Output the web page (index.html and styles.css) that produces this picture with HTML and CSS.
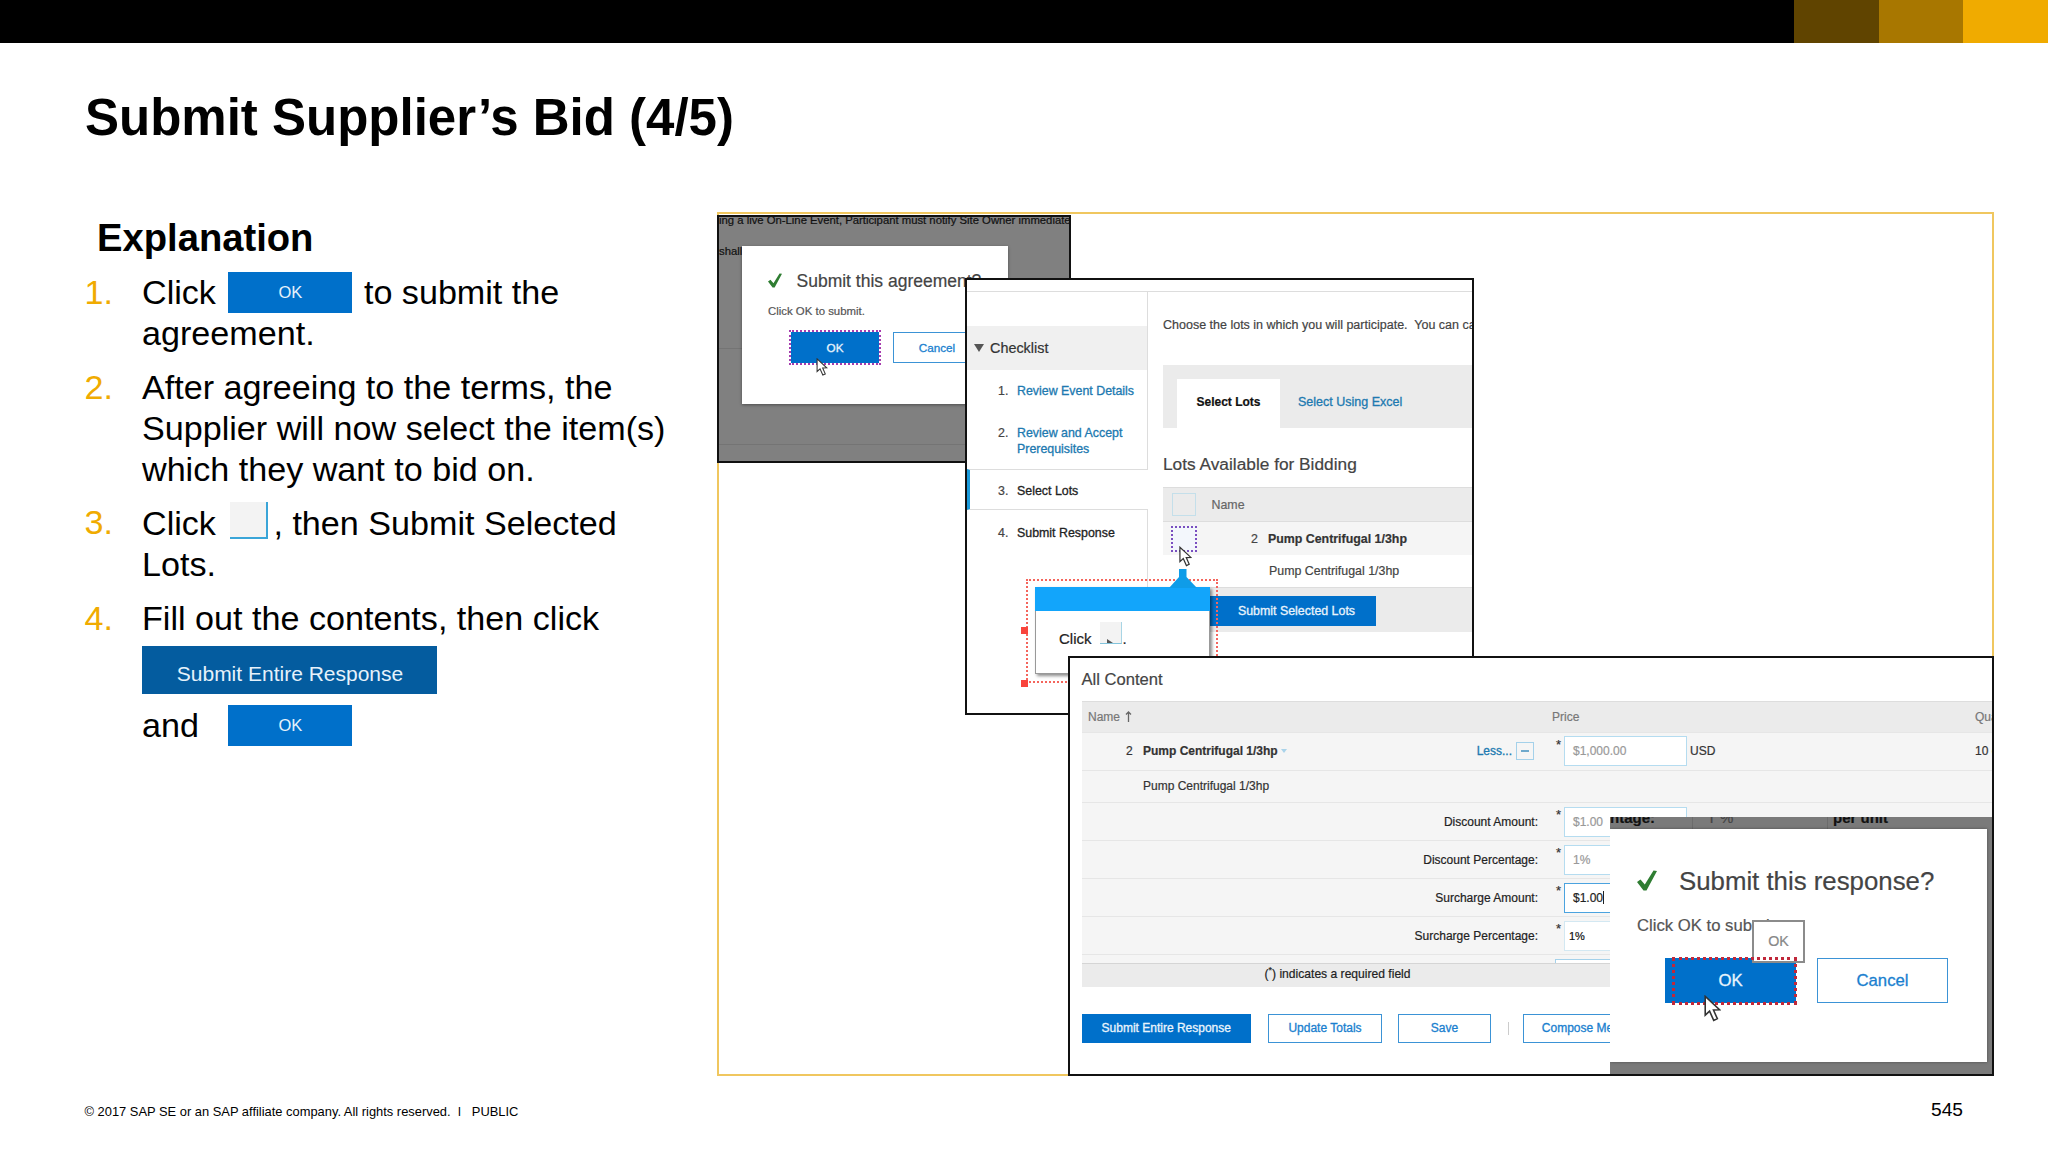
FILE: index.html
```html
<!DOCTYPE html>
<html lang="en">
<head>
  <meta charset="UTF-8" />
  <meta name="viewport" content="width=device-width, initial-scale=1.0" />
  <title>Submit Supplier’s Bid (4/5)</title>
  <link rel="stylesheet" href="styles.css">
</head>
<body>

  <svg class="defs" width="0" height="0">
    <symbol id="cursor" viewBox="0 0 14 22">
      <path d="M1 1 L1 16.5 L4.6 13.2 L8 20.8 L11 19.4 L7.8 12.2 L12.8 12 Z" fill="#fff" stroke="#333" stroke-width="1.3" />
    </symbol>
    <symbol id="check" viewBox="0 0 20 21">
      <path d="M0 12 L3.5 9.5 L7.8 14.5 L16.5 0.5 L20 1 L9.5 20.5 L6.5 20.5 Z" fill="#2f7d32" />
    </symbol>
  </svg>

  <div class="slide">
    <header class="topbar">
      <span class="block dark"></span>
      <span class="block mid"></span>
      <span class="block gold"></span>
    </header>

    <h1>Submit Supplier’s Bid (4/5)</h1>

    <main>
      <section class="explanation">
        <h2>Explanation</h2>
        <ol>
          <li>Click <span class="chip chip-ok">OK</span> to submit the agreement.</li>
          <li>After agreeing to the terms, the Supplier will now select the item(s) which they want to bid on.</li>
          <li>Click <span class="chip-box"></span>, then Submit Selected Lots.</li>
          <li>Fill out the contents, then click
            <span class="chip chip-response">Submit Entire Response</span>
            <span class="and-row">and <span class="chip chip-ok">OK</span></span>
          </li>
        </ol>
      </section>

      <section class="stage">

        <!-- agreement dialog -->
        <div class="window win-agreement">
          <p class="terms">ing a live On-Line Event, Participant must notify Site Owner immediately</p>
          <p class="terms">shall</p>
          <div class="rule rule-first"></div>
          <div class="rule"></div>
          <div class="dialog">
            <div class="dialog-title">
              <svg width="14" height="15"><use href="#check" /></svg>
              <span>Submit this agreement?</span>
            </div>
            <p>Click OK to submit.</p>
            <div class="dialog-buttons">
              <span class="btn primary">OK</span>
              <span class="btn">Cancel</span>
            </div>
            <svg class="cursor" width="12" height="18"><use href="#cursor" /></svg>
          </div>
        </div>

        <!-- select lots -->
        <div class="window win-lots">
          <div class="strip"></div>
          <div class="lots-body">
            <aside>
              <div class="spacer"></div>
              <div class="checklist">
                <svg width="10" height="8"><path d="M0 0 H10 L5 8 Z" fill="#555" /></svg>
                Checklist
              </div>
              <div class="step"><span>1.</span><a>Review Event Details</a></div>
              <div class="step"><span>2.</span><a>Review and Accept Prerequisites</a></div>
              <div class="step active"><span>3.</span><b>Select Lots</b></div>
              <div class="step last"><span>4.</span><b>Submit Response</b></div>
            </aside>
            <div class="lots-main">
              <p class="intro">Choose the lots in which you will participate.&nbsp; You can cancel</p>
              <div class="tabs">
                <span class="tab">Select Lots</span>
                <a>Select Using Excel</a>
              </div>
              <h3>Lots Available for Bidding</h3>
              <div class="lot head"><i class="box"></i><span>Name</span></div>
              <div class="lot odd"><i class="box picked"></i><span class="num">2</span><b>Pump Centrifugal 1/3hp</b></div>
              <div class="lot plain"><span>Pump Centrifugal 1/3hp</span></div>
              <div class="lot foot"><span class="btn primary">Submit Selected Lots</span></div>
            </div>
          </div>
          <svg class="cursor" width="13" height="21"><use href="#cursor" /></svg>
          <div class="callout">
            <i class="handle one"></i>
            <i class="handle two"></i>
            <svg class="pointer" width="28" height="19"><path d="M10 0 H17.5 V8 L28 19 H0 L10 8 Z" fill="#0f9ce8" /></svg>
            <div class="bubble">
              <div class="bubble-head"></div>
              <div class="bubble-text">Click <i class="mini"><svg width="6" height="4"><path d="M0 4 V0 L6 4 Z" fill="#555" /></svg></i>.</div>
            </div>
          </div>
        </div>

        <!-- all content -->
        <div class="window win-content">
          <h3>All Content</h3>
          <div class="row head">
            <span class="name">Name <svg width="7" height="11"><path d="M3.5 11 V1 M1 3.5 L3.5 1 L6 3.5" fill="none" stroke="#666" stroke-width="1.3" /></svg></span>
            <span class="price">Price</span>
            <span>Quantity</span>
          </div>
          <div class="row item">
            <span class="name"><span class="num">2</span><b>Pump Centrifugal 1/3hp</b><svg class="caret" width="6" height="4"><path d="M0 0 H6 L3 4 Z" fill="#a9d3ea" /></svg><a class="less">Less...</a><i class="minus"></i></span>
            <span class="price"><em>*</em><span class="input">$1,000.00</span>USD</span>
            <span class="qty">10 each</span>
          </div>
          <div class="row sub"><span class="name">Pump Centrifugal 1/3hp</span></div>
          <div class="row field">
            <span class="label">Discount Amount:</span>
            <span class="price"><em>*</em><span class="input">$1.00</span>USD</span>
          </div>
          <div class="row field">
            <span class="label">Discount Percentage:</span>
            <span class="price"><em>*</em><span class="input">1%</span></span>
          </div>
          <div class="row field">
            <span class="label">Surcharge Amount:</span>
            <span class="price"><em>*</em><span class="input focus">$1.00<i class="caret-bar"></i></span></span>
          </div>
          <div class="row field">
            <span class="label">Surcharge Percentage:</span>
            <span class="price"><em>*</em><span class="input filled">1%</span></span>
          </div>
          <div class="row cut"><i></i></div>
          <div class="required">(<sup>*</sup>) indicates a required field</div>
          <div class="actions">
            <span class="btn primary submit">Submit Entire Response</span>
            <span class="btn update">Update Totals</span>
            <span class="btn save">Save</span>
            <i class="sep"></i>
            <span class="btn compose">Compose Message</span>
          </div>

          <div class="response">
            <div class="behind"><b>ntage:</b><span>T %</span><b>per unit</b></div>
            <div class="dialog large">
              <div class="dialog-title">
                <svg width="20" height="21"><use href="#check" /></svg>
                <span>Submit this response?</span>
              </div>
              <p>Click OK to submit.</p>
              <div class="dialog-buttons">
                <span class="btn primary">OK</span>
                <span class="btn">Cancel</span>
              </div>
              <span class="tooltip">OK</span>
              <i class="marker"></i>
              <svg class="cursor" width="17" height="27"><use href="#cursor" /></svg>
            </div>
          </div>
        </div>

      </section>
    </main>

    <footer>
      <span>© 2017 SAP SE or an SAP affiliate company. All rights reserved. &nbsp;ǀ&nbsp;&nbsp; PUBLIC</span>
      <span class="page">545</span>
    </footer>
  </div>

</body>
</html>
```

FILE: styles.css
```css
* {
  box-sizing: border-box;
}

body {
  margin: 0;
  font-family: "Liberation Sans", Arial, sans-serif;
  background: #fff;
  color: #000;
  overflow: hidden;
}

h1, h2, h3, p, ol {
  margin: 0;
  padding: 0;
}

i, em {
  font-style: normal;
}

svg {
  display: block;
  flex: none;
}

.defs {
  position: absolute;
}

.slide {
  width: 2048px;
  height: 1152px;
  display: flex;
  flex-direction: column;
}

/* top bar */
.topbar {
  height: 42.5px;
  background: #000;
  display: flex;
  justify-content: flex-end;
}

.block {
  width: 84.6px;
}

.dark {
  background: #604400;
}

.mid {
  background: #a87700;
}

.gold {
  background: #f0ab00;
}

h1 {
  margin: 45px 0 0 85px;
  height: 60px;
  font-size: 51px;
  line-height: 60px;
}

main {
  display: flex;
  height: 864px;
  margin-top: 64.5px;
  padding-left: 85px;
}

/* left column */
.explanation {
  width: 632px;
  flex: none;
}

h2 {
  padding-left: 12px;
  margin-top: 2.5px;
  font-size: 38.2px;
  line-height: 46px;
}

ol {
  list-style: none;
  counter-reset: step;
  margin-top: 11.8px;
  font-size: 34.13px;
  line-height: 41.1px;
}

li {
  counter-increment: step;
  width: 600px;
  padding-left: 57px;
  margin-bottom: 12.2px;
}

li::before {
  content: counter(step) ".";
  float: left;
  width: 57px;
  margin-left: -57.5px;
  color: #f0ab00;
}

.chip {
  display: inline-block;
  background: #0070ca;
  color: #e6f2fb;
  text-align: center;
}

.chip-ok {
  width: 124px;
  height: 41px;
  margin: 0 2px 0 3px;
  font-size: 16.5px;
  line-height: 41px;
  vertical-align: top;
}

.chip-box {
  display: inline-block;
  width: 38px;
  height: 37px;
  margin: 0 5px 0 5px;
  background: #f3f3f3;
  border-right: 2px solid #3aa5d8;
  border-bottom: 2px solid #3aa5d8;
  vertical-align: -4px;
}

.chip-response {
  display: block;
  width: 295px;
  height: 48px;
  margin-top: 7.5px;
  padding: 4px 0 0 1px;
  background: #045c9f;
  font-size: 21px;
  line-height: 47px;
}

.and-row {
  display: block;
  margin-top: 10.5px;
}

.and-row .chip-ok {
  margin-left: 20px;
}

/* screenshot area */
.stage {
  position: relative;
  width: 1276.5px;
  border: 2px solid #f0c75f;
}

.window {
  position: absolute;
  border: 2px solid #111;
  background: #fff;
  overflow: hidden;
  -webkit-text-stroke: 0.2px;
}

.btn {
  display: flex;
  align-items: center;
  justify-content: center;
  flex: none;
  border: 1.5px solid #3b93d6;
  color: #1a7fcf;
  background: #fff;
  white-space: nowrap;
  -webkit-text-stroke: 0.3px;
}

.btn.primary {
  background: #0070ca;
  border-color: #0070ca;
  color: #e9f4fc;
}

.cursor {
  position: absolute;
}

/* window 1 */
.win-agreement {
  left: -2px;
  top: 1px;
  width: 354px;
  height: 248px;
  background: #808080;
}

.terms {
  margin: -4px 0 17px;
  height: 14px;
  font-size: 11.3px;
  line-height: 14px;
  color: #111;
  white-space: nowrap;
}

.win-agreement .terms + .terms {
  margin: 0;
}

.rule {
  height: 96px;
  border-top: 1px solid #747474;
}

.rule-first {
  margin-top: 90px;
}

.dialog {
  position: absolute;
  left: 23px;
  top: 29px;
  width: 266px;
  height: 158px;
  padding: 24.5px 0 0 26px;
  background: #fff;
  box-shadow: 0 1px 3px rgba(0, 0, 0, 0.4);
  color: #555;
}

.dialog-title {
  display: flex;
  align-items: center;
  gap: 14.5px;
  height: 20px;
  font-size: 17.5px;
  line-height: 20px;
  color: #444;
  white-space: nowrap;
}

.dialog p {
  margin-top: 12.3px;
  font-size: 11.4px;
  line-height: 16px;
}

.dialog-buttons {
  display: flex;
  gap: 14px;
  margin: 13.7px 0 0 23px;
  font-size: 11.7px;
}

.dialog .btn {
  width: 88px;
  height: 30.5px;
}

.dialog .primary {
  outline: 2px dotted #a63cae;
}

.dialog .cursor {
  left: 74px;
  top: 112px;
}

/* window 2 */
.win-lots {
  left: 246px;
  top: 64px;
  width: 509px;
  height: 437px;
  font-size: 12.4px;
  color: #444;
}

.strip {
  height: 12px;
  border-bottom: 1px solid #ddd;
}

.lots-body {
  display: flex;
}

aside {
  width: 181px;
  flex: none;
}

.spacer {
  height: 34px;
  border-right: 1px solid #ddd;
}

.checklist {
  display: flex;
  align-items: center;
  gap: 6px;
  height: 43.5px;
  padding: 1px 0 0 7px;
  background: #f0f0f0;
  border-right: 1px solid #ddd;
  font-size: 14.4px;
  color: #333;
}

.step {
  display: flex;
  gap: 11px;
  padding: 14.5px 8px 12.5px 31px;
  line-height: 15.3px;
  border-right: 1px solid #ddd;
}

.step span {
  width: 8px;
}

.step a, .tabs a, .less {
  color: #2079b0;
  -webkit-text-stroke: 0.3px;
}

.step b {
  font-weight: normal;
  color: #222;
  -webkit-text-stroke: 0.3px;
}

.step.active {
  height: 41px;
  padding-left: 28px;
  border: solid #ddd;
  border-width: 1px 0;
  border-left: 3px solid #1b9bdc;
  padding-top: 13.5px;
}

.step.last {
  height: 77px;
  padding-top: 16px;
}

.lots-main {
  width: 309px;
  margin-left: 15px;
  flex: none;
}

.intro {
  margin-top: 25px;
  font-size: 12.5px;
  line-height: 16px;
  white-space: nowrap;
}

.tabs {
  display: flex;
  align-items: flex-end;
  gap: 18px;
  height: 63px;
  margin-top: 32px;
  padding-left: 14px;
  background: #ebebeb;
  line-height: 46px;
}

.tabs a {
  height: 49px;
  font-size: 12.5px;
}

.tab {
  width: 103px;
  height: 49px;
  background: #fff;
  color: #111;
  font-size: 12px;
  font-weight: bold;
  text-align: center;
}

h3 {
  font-weight: normal;
  color: #444;
}

.win-lots h3 {
  margin-top: 25.7px;
  font-size: 17.3px;
  line-height: 20px;
}

.lot {
  display: flex;
  align-items: center;
  height: 32px;
}

.lot.head {
  height: 35px;
  margin-top: 13.8px;
  padding-left: 9px;
  gap: 16px;
  background: #ebebeb;
  border-top: 1px solid #ddd;
  border-bottom: 1px solid #ddd;
  color: #666;
}

.box {
  width: 23.5px;
  height: 23px;
  border: 1px solid #c4dfea;
}

.lot.odd {
  height: 33px;
  padding: 0 0 0 8px;
  background: #f5f5f5;
}

.lot.odd b {
  color: #333;
}

.box.picked {
  width: 26px;
  height: 26px;
  border: 2px dotted #7a4fc0;
  background: #f3f7fc;
}

.lot .num {
  margin: 0 10px 0 54px;
}

.lot.plain {
  padding-left: 106px;
}

.lot.foot {
  height: 45px;
  background: #ebebeb;
  border-top: 1px solid #ddd;
}

.lot.foot .btn {
  width: 213px;
  height: 30.5px;
  padding-left: 54px;
  margin-top: 1px;
}

.win-lots > .cursor {
  left: 212px;
  top: 266px;
}

.callout {
  position: absolute;
  left: 59px;
  top: 299px;
  width: 192px;
  height: 104px;
  padding: 6px 0 0 7px;
  border: 2px dotted #f4655c;
}

.handle {
  position: absolute;
  left: -7px;
  width: 7px;
  height: 7px;
  background: #f9443c;
}

.handle.one {
  top: 46px;
}

.handle.two {
  top: 99px;
}

.pointer {
  position: absolute;
  left: 141px;
  top: -12px;
}

.bubble {
  width: 175px;
  height: 87px;
  background: #fff;
  border: 1px solid #999;
  box-shadow: 2px 2px 3px rgba(0, 0, 0, 0.45);
}

.bubble-head {
  height: 23.5px;
  margin: -1px -1px 0;
  background: #12a5fb;
}

.bubble-text {
  display: flex;
  align-items: flex-end;
  height: 37.5px;
  padding-left: 23px;
  font-size: 15px;
  line-height: 18px;
  color: #222;
}

.mini {
  display: flex;
  align-items: flex-end;
  justify-content: center;
  width: 22px;
  height: 22px;
  margin: 0 1px 4px 8px;
  background: #f3f3f3;
  border-right: 1px solid #a8d5e5;
  border-bottom: 1.5px solid #82c4dc;
}

/* window 3 */
.win-content {
  left: 349px;
  top: 442px;
  width: 926px;
  height: 420px;
  padding: 11.5px 0 0 11.5px;
  font-size: 12px;
  color: #333;
}

.win-content h3 {
  font-size: 16.6px;
  line-height: 20px;
  margin-bottom: 11px;
}

.row {
  display: grid;
  grid-template-columns: 456.5px 423px 60px;
  column-gap: 14px;
  align-items: center;
  width: 940px;
  height: 38px;
  background: #f5f5f5;
  border-bottom: 1px solid #e6e6e6;
}

.row.head {
  height: 32px;
  grid-template-columns: 470.5px 409px 60px;
  background: #ebebeb;
  border-top: 1px solid #ddd;
  color: #777;
  column-gap: 0;
}

.row.head span:last-child {
  margin-left: 14px;
}

.name {
  display: flex;
  align-items: center;
}

.row.head .name {
  gap: 5px;
  padding-left: 6.5px;
}

.row.item {
  column-gap: 0;
  grid-template-columns: 470.5px 423px 60px;
}

.row.item .name {
  padding-left: 44.5px;
}

.item .num {
  width: 17px;
}

.caret {
  margin-left: 3px;
}

.less {
  margin-left: 190px;
}

.minus {
  width: 18px;
  height: 18px;
  margin-left: 4px;
  padding: 7px 4px;
  border: 1px solid #a4d1ea;
}

.minus::before {
  content: "";
  display: block;
  height: 2px;
  background: #6fa9cc;
}

.price {
  display: flex;
  align-items: center;
}

.price em {
  width: 8px;
  margin: 0 0 14px 4px;
  font-size: 13px;
}

.input {
  display: flex;
  align-items: center;
  width: 122.5px;
  height: 30px;
  margin-right: 3.5px;
  padding-left: 8px;
  background: #fff;
  border: 1px solid #b5dcf0;
  color: #999;
}

.input.focus {
  border: 1.5px solid #4ba3df;
  color: #222;
}

.input.filled {
  padding-left: 4px;
  color: #111;
  font-size: 11px;
  border-color: #d3e8f2;
}

.caret-bar {
  width: 1px;
  height: 13px;
  background: #222;
}

.row.sub {
  height: 32.5px;
}

.row.sub .name {
  padding-left: 61.5px;
}

.label {
  text-align: right;
  color: #222;
}

.row.cut {
  height: 8px;
  border: 0;
}

.row.cut i {
  width: 140px;
  height: 4px;
  margin: 4px 0 0 473px;
  background: #fff;
  border: 1px solid #a4d1ea;
  border-bottom: 0;
}

.required {
  height: 23.5px;
  padding-left: 183px;
  background: #ebebeb;
  border-top: 1px solid #d5d5d5;
  font-size: 12.1px;
  line-height: 20px;
  color: #222;
}

.required sup {
  font-size: 9px;
  line-height: 0;
}

.actions {
  display: flex;
  align-items: center;
  margin-top: 27.5px;
}

.actions .btn {
  height: 28.5px;
}

.submit {
  width: 169.5px;
}

.update {
  width: 114px;
  margin-left: 17px;
}

.save {
  width: 93px;
  margin-left: 16px;
}

.sep {
  width: 1px;
  height: 13px;
  margin: 0 14px 0 17px;
  background: #ccc;
}

.compose {
  width: 141px;
}

.response {
  position: absolute;
  left: 540px;
  top: 159px;
  width: 382px;
  height: 257px;
  background: #7a7a7a;
  overflow: hidden;
}

.behind {
  display: flex;
  height: 12px;
  font-size: 15px;
  line-height: 2px;
  color: #111;
}

.behind span {
  width: 136px;
  height: 12px;
  margin-left: 37px;
  padding-left: 14px;
  border: solid #6c6c6c;
  border-width: 0 1px;
  color: #444;
}

.behind b:last-child {
  margin-left: 5px;
}

.dialog.large {
  left: 0;
  top: 12px;
  width: 377px;
  height: 233px;
  padding: 36.5px 0 0 27px;
  box-shadow: 0 0 3px rgba(0, 0, 0, 0.35);
}

.large .dialog-title {
  gap: 22px;
  height: 30px;
  font-size: 25.8px;
  line-height: 30px;
}

.large p {
  margin-top: 20.5px;
  font-size: 16.7px;
  line-height: 20px;
}

.large .dialog-buttons {
  gap: 21px;
  margin: 22px 0 0 28px;
  font-size: 16.7px;
}

.large .btn {
  width: 131px;
  height: 45px;
}

.large .primary {
  outline: none;
}

.tooltip {
  position: absolute;
  left: 142px;
  top: 91px;
  width: 53px;
  height: 43px;
  border: 2px solid #8b8b8b;
  background: #fff;
  color: #888;
  font-size: 14.3px;
  line-height: 39px;
  text-align: center;
}

.marker {
  position: absolute;
  left: 62px;
  top: 128px;
  width: 125px;
  height: 48px;
  border: 3px dotted #c0283a;
}

.dialog.large .cursor {
  left: 94px;
  top: 166px;
}

/* footer */
footer {
  display: flex;
  justify-content: space-between;
  align-items: baseline;
  margin-top: 22.5px;
  padding: 0 85px 0 84.5px;
  font-size: 12.9px;
}

.page {
  font-size: 19.2px;
}
```
